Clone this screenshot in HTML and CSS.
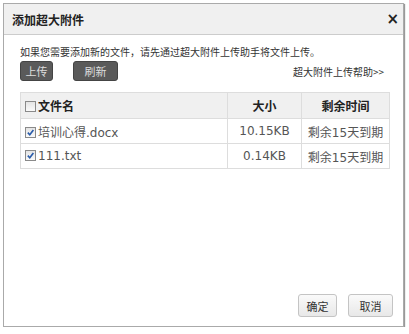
FILE: index.html
```html
<!DOCTYPE html>
<html lang="zh-CN">
<head>
  <meta charset="UTF-8">
  <title>添加超大附件</title>
  <link rel="stylesheet" href="styles.css">
</head>
<body>
  <div class="dialog">
    <div class="dialog-title">
      <span class="title-text">添加超大附件</span>
      <span class="close">×</span>
    </div>

    <div class="dialog-body">
      <div class="tip">如果您需要添加新的文件，请先通过超大附件上传助手将文件上传。</div>

      <div class="toolbar">
        <div class="tool-buttons">
          <button class="btn-dark">上传</button>
          <button class="btn-dark">刷新</button>
        </div>
        <a class="help-link" href="#">超大附件上传帮助&gt;&gt;</a>
      </div>

      <table class="file-table">
        <thead>
          <tr>
            <th class="col-name"><span class="check"></span>文件名</th>
            <th class="col-size">大小</th>
            <th class="col-time">剩余时间</th>
          </tr>
        </thead>
        <tbody>
          <tr>
            <td class="col-name"><span class="check checked"><svg viewBox="0 0 10 10"><path d="M2 5.2 L4.2 7.5 L8.2 2.2" /></svg></span>培训心得.docx</td>
            <td class="col-size">10.15KB</td>
            <td class="col-time">剩余15天到期</td>
          </tr>
          <tr>
            <td class="col-name"><span class="check checked"><svg viewBox="0 0 10 10"><path d="M2 5.2 L4.2 7.5 L8.2 2.2" /></svg></span>111.txt</td>
            <td class="col-size">0.14KB</td>
            <td class="col-time">剩余15天到期</td>
          </tr>
        </tbody>
      </table>
    </div>

    <div class="dialog-footer">
      <button class="btn-light">确定</button>
      <button class="btn-light">取消</button>
    </div>
  </div>
</body>
</html>
```

FILE: styles.css
```css
body {
  margin: 0;
  padding: 3px 0 0 3px;
  background-color: #fff;
  font-family: "DejaVu Sans", "Noto Sans CJK SC", sans-serif;
  font-size: 12px;
  color: #333;
}

.dialog {
  width: 399px;
  height: 322px;
  border: 1px solid #aaa;
  box-shadow: 1px 1px 1px #999;
  display: flex;
  flex-direction: column;
}

.dialog-title {
  height: 30px;
  background-color: #f0f0f0;
  border-bottom: 1px solid #ccc;
  display: flex;
  align-items: center;
  justify-content: space-between;
  padding: 0 4px 0 8px;
}

.title-text {
  font-family: "Noto Sans CJK SC", sans-serif;
  font-size: 12px;
  font-weight: bold;
  color: #222;
}

.close {
  font-family: "DejaVu Sans", sans-serif;
  font-size: 15px;
  font-weight: bold;
  color: #222;
}

.dialog-body {
  flex: 1;
  padding: 10px 14px 0 16px;
}

.tip {
  font-family: "Noto Sans CJK SC", sans-serif;
  font-size: 10px;
  line-height: 14px;
  color: #333;
}

.toolbar {
  display: flex;
  justify-content: space-between;
  align-items: center;
  margin-top: 2px;
  padding-right: 5px;
}

.tool-buttons {
  display: flex;
  gap: 20px;
}

.btn-dark {
  width: 33px;
  height: 20px;
  padding: 0;
  border: 1px solid #444;
  border-radius: 3px;
  background-color: #5a5a5a;
  color: #ddd;
  font-family: "Noto Sans CJK SC", sans-serif;
  font-size: 11px;
}

.btn-dark + .btn-dark {
  width: 45px;
}

.help-link {
  font-family: "Noto Sans CJK SC", sans-serif;
  font-size: 10px;
  color: #333;
  text-decoration: none;
}

.file-table {
  width: 370px;
  margin-top: 11px;
  border-collapse: collapse;
}

.file-table th,
.file-table td {
  border: 1px solid #ddd;
  font-family: "DejaVu Sans", "Noto Sans CJK SC", sans-serif;
  font-size: 12px;
  padding: 0 4px;
}

.file-table th {
  height: 25px;
  background-color: #f0f0f0;
  font-weight: bold;
  color: #222;
}

.file-table td {
  height: 24px;
  color: #555;
}

.file-table th.col-name {
  text-align: left;
}

.col-name {
  padding-left: 3px;
}

.col-size {
  width: 65px;
  text-align: center;
}

.col-time {
  width: 79px;
  text-align: center;
}

.check {
  display: inline-block;
  width: 9px;
  height: 9px;
  margin-right: 2px;
  border: 1px solid #8a8a8a;
  background: linear-gradient(#e4e4e4, #fafafa);
  vertical-align: -1px;
}

.check svg {
  display: block;
  width: 9px;
  height: 9px;
}

.check path {
  fill: none;
  stroke: #2a5caa;
  stroke-width: 1.8;
}

.dialog-footer {
  display: flex;
  justify-content: flex-end;
  gap: 11px;
  padding: 0 10px 9px 0;
}

.btn-light {
  width: 39px;
  height: 23px;
  padding: 0;
  border: 1px solid #c4c4c4;
  border-radius: 3px;
  background: linear-gradient(#fafafa, #e8e8e8);
  color: #333;
  font-family: "Noto Sans CJK SC", sans-serif;
  font-size: 11px;
}

.btn-light + .btn-light {
  width: 45px;
}
```
